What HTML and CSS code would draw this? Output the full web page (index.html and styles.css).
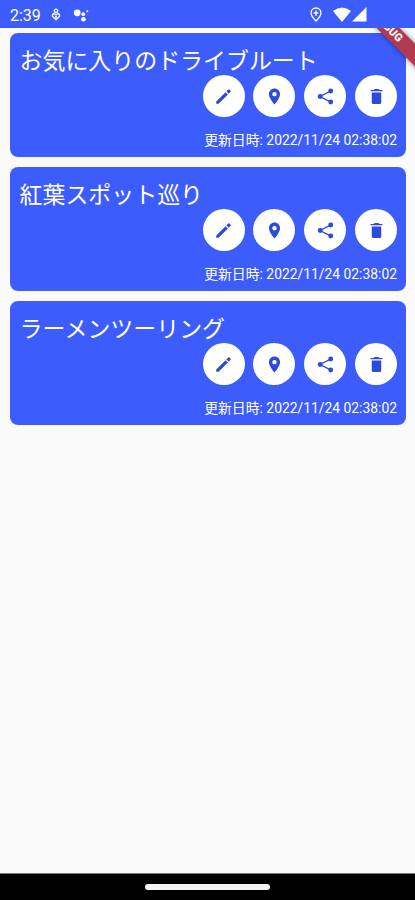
FILE: index.html
```html
<!DOCTYPE html>
<html lang="ja">
<head>
<meta charset="utf-8">
<title>ドライブルート</title>
<link rel="stylesheet" href="styles.css">
</head>
<body>
<svg class="defs" aria-hidden="true">
  <symbol id="edit" viewBox="0 0 24 24"><path d="M2.800 18.300V21.300H5.800L17.600 9.500 14.600 6.500ZM18.600 8.500 21 6.100Q21.700 5.300 21 4.600L19.500 3.100Q18.800 2.400 18 3.100L15.600 5.500Z"/></symbol>
  <symbol id="place" viewBox="0 0 24 24"><path d="M12 2C8.13 2 5 5.13 5 9c0 5.25 7 13 7 13s7-7.750 7-13c0-3.870-3.130-7-7-7zm0 9.800a2.800 2.800 0 0 1 0-5.600 2.800 2.800 0 0 1 0 5.600z"/></symbol>
  <symbol id="share" viewBox="0 0 24 24"><path class="links" d="M19 5 5 12l14 7"/><circle cx="18.600" cy="5" r="3.100"/><circle cx="5.300" cy="12" r="3.100"/><circle cx="18.600" cy="19" r="3.100"/></symbol>
  <symbol id="trash" viewBox="0 0 24 24"><path d="M6 7H18V19.500Q18 21.500 16 21.500H8Q6 21.500 6 19.500ZM19.500 3.800V5.400H4.500V3.800H8.500L9.500 2.600H14.500L15.500 3.800Z"/></symbol>
</svg>
<div class="screen">
  <header class="status">
    <div class="status-left">
      <span class="clock">2:39</span>
      <svg class="account" viewBox="0 0 10 13"><circle cx="5" cy="2.800" r="1.700"/><path d="M5 11.800 1.600 8.500Q1 6.200 2.800 5.400L5 7 7.200 5.400Q9 6.200 8.400 8.500Z"/><path d="M4 8.600 5 9.500 6 8.600"/></svg>
      <svg class="assistant" viewBox="0 0 16 14"><circle cx="4.200" cy="4.800" r="3.400"/><circle cx="10.300" cy="6.200" r="1.900"/><circle cx="10.400" cy="11.300" r="2.300"/><circle cx="14.300" cy="3.200" r="1"/></svg>
    </div>
    <div class="status-right">
      <svg class="pin" viewBox="0 0 12 15"><path d="M6 1C3.200 1 1.100 3.100 1.100 5.800 1.100 9.400 6 14 6 14s4.900-4.600 4.900-8.200C10.900 3.100 8.800 1 6 1Z"/><path d="M6 3.400V9M3.600 6H8.400"/></svg>
      <svg class="wifi" viewBox="0 0 18 15"><path d="M0 4Q9-3.200 18 4L9 15Z"/></svg>
      <svg class="signal" viewBox="0 0 15 15"><path d="M14.500 0V14.500H0Z"/></svg>
    </div>
  </header>
  <main class="routes">
    <article class="card">
      <h2>お気に入りのドライブルート</h2>
      <div class="actions">
        <button aria-label="編集"><svg><use href="#edit"/></svg></button>
        <button aria-label="地図"><svg><use href="#place"/></svg></button>
        <button aria-label="共有"><svg><use href="#share"/></svg></button>
        <button aria-label="削除"><svg><use href="#trash"/></svg></button>
      </div>
      <p>更新日時: 2022/11/24 02:38:02</p>
    </article>
    <article class="card">
      <h2>紅葉スポット巡り</h2>
      <div class="actions">
        <button aria-label="編集"><svg><use href="#edit"/></svg></button>
        <button aria-label="地図"><svg><use href="#place"/></svg></button>
        <button aria-label="共有"><svg><use href="#share"/></svg></button>
        <button aria-label="削除"><svg><use href="#trash"/></svg></button>
      </div>
      <p>更新日時: 2022/11/24 02:38:02</p>
    </article>
    <article class="card">
      <h2>ラーメンツーリング</h2>
      <div class="actions">
        <button aria-label="編集"><svg><use href="#edit"/></svg></button>
        <button aria-label="地図"><svg><use href="#place"/></svg></button>
        <button aria-label="共有"><svg><use href="#share"/></svg></button>
        <button aria-label="削除"><svg><use href="#trash"/></svg></button>
      </div>
      <p>更新日時: 2022/11/24 02:38:02</p>
    </article>
    <div class="ribbon-clip"><div class="ribbon">DEBUG</div></div>
  </main>
  <footer class="navbar"><div class="handle"></div></footer>
</div>
</body>
</html>
```
FILE: styles.css
```css
* { box-sizing: border-box; margin: 0; padding: 0; }
body {
  background: #fafafa;
  color: #fff;
  font-family: Roboto, "Noto Sans CJK JP", sans-serif;
}
.defs { display: none; }
.screen { display: flex; flex-direction: column; height: 900px; overflow: hidden; }
.status {
  display: flex;
  justify-content: space-between;
  align-items: center;
  flex: none;
  height: 28px;
  padding: 1px 48px 0 10px;
  background: #3d5cfc;
}
.status svg { fill: #fff; }
.status-left, .status-right { display: flex; align-items: center; }
.clock { width: 41px; padding-top: 2px; font-size: 16px; line-height: 20px; }
.account { width: 10px; height: 13px; }
.status .account, .status .pin { fill: none; stroke: #fff; stroke-width: 1.3; }
.assistant { width: 16px; height: 14px; margin-left: 12px; }
.pin { width: 12px; height: 15px; margin-right: 11px; }
.wifi { width: 18px; height: 15px; margin-right: 1px; }
.signal { width: 15px; height: 15px; }
.routes {
  position: relative;
  display: flex;
  flex-direction: column;
  flex: 1;
  gap: 10px;
  padding: 5px 9px 0 10px;
}
.card {
  display: flex;
  flex-direction: column;
  height: 124px;
  padding: 10px 9px 0;
  border-radius: 8px;
  background: #3d5cfc;
}
.card h2 { height: 32px; padding-left: .5px; font-size: 22.95px; font-weight: 400; line-height: 37px; white-space: nowrap; }
.actions { display: flex; justify-content: flex-end; gap: 8.8px; }
.actions button {
  display: flex;
  align-items: center;
  justify-content: center;
  width: 42px;
  height: 42px;
  border: 0;
  border-radius: 50%;
  background: #fff;
}
.actions svg { width: 19px; height: 19px; fill: #2c4bdc; }
.links { fill: none; stroke: #2c4bdc; stroke-width: 1.7; }
.card p { margin-top: 13px; font-size: 13.87px; line-height: 20px; text-align: right; white-space: nowrap; }
.ribbon-clip {
  position: absolute;
  top: 0;
  right: 0;
  width: 60px;
  height: 60px;
  overflow: hidden;
}
.ribbon {
  position: absolute;
  left: -27px;
  top: -8.5px;
  width: 120px;
  height: 16px;
  background: #b23a50;
  box-shadow: 0 0 5px rgba(0, 0, 0, .5);
  font-size: 11px;
  font-weight: 900;
  line-height: 16px;
  text-align: center;
  transform: rotate(45deg);
}
.navbar {
  display: flex;
  justify-content: center;
  flex: none;
  height: 27px;
  padding-top: 9.5px;
  border-top: 1px solid #777;
  background: #000;
}
.handle { width: 125px; height: 6px; border-radius: 3px; background: #f4f4f4; }
```
